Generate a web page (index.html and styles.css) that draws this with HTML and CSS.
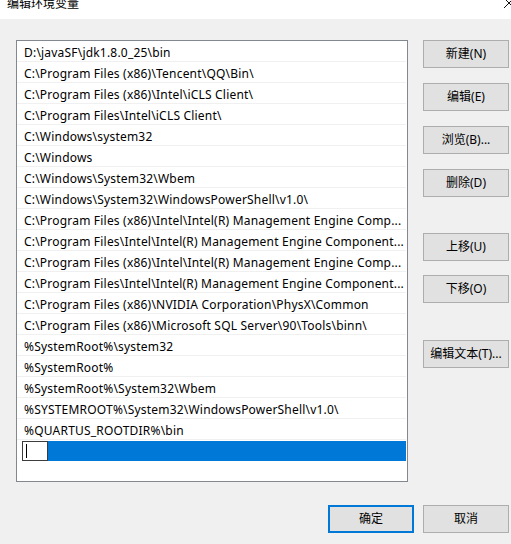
FILE: index.html
```html
<!DOCTYPE html>
<html lang="zh-CN">
<head>
<meta charset="utf-8">
<title>编辑环境变量</title>
<link rel="stylesheet" href="styles.css">
</head>
<body>
<div class="dialog">
  <div class="titlebar">
    <span class="title">编辑环境变量</span>
    <svg class="close" width="12" height="12" viewBox="0 0 12 12"><path d="M1 1 L11 11 M11 1 L1 11" stroke="#111" stroke-width="1" fill="none"/></svg>
  </div>
  <div class="main">
    <div class="listbox">
      <div class="row">D:\javaSF\jdk1.8.0_25\bin</div>
      <div class="row">C:\Program Files (x86)\Tencent\QQ\Bin\</div>
      <div class="row">C:\Program Files (x86)\Intel\iCLS Client\</div>
      <div class="row">C:\Program Files\Intel\iCLS Client\</div>
      <div class="row">C:\Windows\system32</div>
      <div class="row">C:\Windows</div>
      <div class="row">C:\Windows\System32\Wbem</div>
      <div class="row">C:\Windows\System32\WindowsPowerShell\v1.0\</div>
      <div class="row">C:\Program Files (x86)\Intel\Intel(R) Management Engine Comp...</div>
      <div class="row">C:\Program Files\Intel\Intel(R) Management Engine Component...</div>
      <div class="row">C:\Program Files (x86)\Intel\Intel(R) Management Engine Comp...</div>
      <div class="row">C:\Program Files\Intel\Intel(R) Management Engine Component...</div>
      <div class="row">C:\Program Files (x86)\NVIDIA Corporation\PhysX\Common</div>
      <div class="row">C:\Program Files (x86)\Microsoft SQL Server\90\Tools\binn\</div>
      <div class="row">%SystemRoot%\system32</div>
      <div class="row">%SystemRoot%</div>
      <div class="row">%SystemRoot%\System32\Wbem</div>
      <div class="row">%SYSTEMROOT%\System32\WindowsPowerShell\v1.0\</div>
      <div class="row">%QUARTUS_ROOTDIR%\bin</div>
      <div class="edit-row">
        <div class="edit-box"><span class="caret"></span></div>
        <div class="edit-fill"></div>
      </div>
    </div>
    <div class="side">
      <button class="btn">新建(N)</button>
      <button class="btn">编辑(E)</button>
      <button class="btn">浏览(B)...</button>
      <button class="btn">删除(D)</button>
      <button class="btn btn-gap">上移(U)</button>
      <button class="btn">下移(O)</button>
      <button class="btn btn-gap2">编辑文本(T)...</button>
    </div>
  </div>
  <div class="footer">
    <button class="btn btn-default">确定</button>
    <button class="btn">取消</button>
  </div>
</div>
</body>
</html>
```

FILE: styles.css
```css
* { box-sizing: border-box; }
html, body {
  margin: 0;
  padding: 0;
  background: #f0f0f0;
  font-family: "Noto Sans", "Noto Sans CJK SC", sans-serif;
  font-size: 12px;
  color: #000;
}
.dialog {
  width: 511px;
  height: 544px;
  overflow: hidden;
}
.titlebar {
  height: 19px;
  background: #fff;
  display: flex;
  justify-content: space-between;
  align-items: flex-start;
  overflow: hidden;
}
.title {
  margin-left: 7px;
  margin-top: -3px;
  line-height: 12px;
  font-family: "Noto Sans CJK SC", sans-serif;
  font-size: 12px;
}
.close {
  margin-top: -3px;
  margin-right: -4px;
}
.main {
  display: flex;
  align-items: flex-start;
  padding-top: 21px;
  padding-left: 16px;
}
.listbox {
  width: 392px;
  height: 442px;
  border: 1px solid #828790;
  background: #fff;
  overflow: hidden;
}
.row {
  height: 21px;
  padding-top: 2px;
  padding-left: 7px;
  margin-right: 1px;
  line-height: 19px;
  letter-spacing: 0.2px;
  border-bottom: 1px solid #f0f0f0;
  white-space: nowrap;
  overflow: hidden;
}
.edit-row {
  display: flex;
  height: 20px;
  margin-top: 1px;
  margin-left: 5px;
  margin-right: 1px;
}
.edit-box {
  width: 26px;
  height: 20px;
  border: 1px solid #3c3c3c;
  background: #fff;
  padding: 2px 0 0 3px;
}
.caret {
  display: block;
  width: 1px;
  height: 14px;
  background: #000;
}
.edit-fill {
  flex: 1;
  background: #0078d7;
}
.side {
  display: flex;
  flex-direction: column;
  margin-left: 15px;
}
.btn {
  width: 86px;
  height: 28px;
  margin: 0 0 15px 0;
  padding: 0;
  background: #e1e1e1;
  border: 1px solid #adadad;
  font-family: "Noto Sans", "Noto Sans CJK SC", sans-serif;
  font-size: 12px;
  color: #000;
  line-height: 26px;
  text-align: center;
}
.btn-gap { margin-top: 21px; margin-bottom: 14px; }
.btn-gap2 { margin-top: 22px; }
.footer {
  display: flex;
  justify-content: flex-end;
  gap: 9px;
  padding-top: 23px;
  padding-right: 2px;
}
.footer .btn { margin: 0; }
.btn-default {
  border: 2px solid #0078d7;
  line-height: 24px;
}
```
